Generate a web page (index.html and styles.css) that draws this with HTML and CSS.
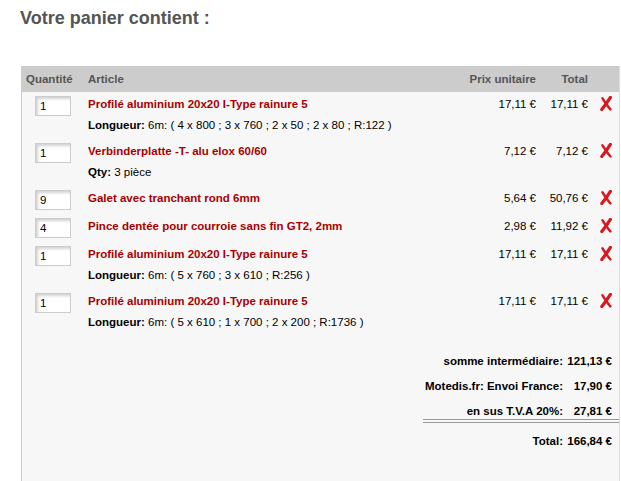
FILE: index.html
```html
<!DOCTYPE html>
<html lang="fr">
<head>
  <meta charset="UTF-8">
  <meta name="viewport" content="width=device-width, initial-scale=1.0">
  <title>Votre panier</title>
  <link rel="stylesheet" href="styles.css">
</head>
<body>

  <h1 class="cart-title">Votre panier contient :</h1>

  <div class="cart-panel">
    <table class="cart-table">
      <colgroup>
        <col class="col-qty">
        <col class="col-article">
        <col class="col-price">
        <col class="col-total">
        <col class="col-remove">
      </colgroup>
      <thead>
        <tr>
          <th class="th-qty">Quantité</th>
          <th>Article</th>
          <th class="num">Prix unitaire</th>
          <th class="num">Total</th>
          <th></th>
        </tr>
      </thead>
      <tbody>
        <tr>
          <td class="qty"><input type="text" value="1"></td>
          <td>
            <div class="name">Profilé aluminium 20x20 I-Type rainure 5</div>
            <div class="detail"><b>Longueur:</b> 6m: ( 4 x 800 ; 3 x 760 ; 2 x 50 ; 2 x 80 ; R:122 )</div>
          </td>
          <td class="num">17,11 €</td>
          <td class="num">17,11 €</td>
          <td class="remove"><svg viewBox="0 0 12 15"><path d="M10.4 1.4 C8.4 4.6 5.6 8.8 1.8 13.6"/><path class="thin" d="M2.4 2.2 C4.2 5 7 9.6 10.4 13.4"/></svg></td>
        </tr>
        <tr>
          <td class="qty"><input type="text" value="1"></td>
          <td>
            <div class="name">Verbinderplatte -T- alu elox 60/60</div>
            <div class="detail"><b>Qty:</b> 3 pièce</div>
          </td>
          <td class="num">7,12 €</td>
          <td class="num">7,12 €</td>
          <td class="remove"><svg viewBox="0 0 12 15"><path d="M10.4 1.4 C8.4 4.6 5.6 8.8 1.8 13.6"/><path class="thin" d="M2.4 2.2 C4.2 5 7 9.6 10.4 13.4"/></svg></td>
        </tr>
        <tr>
          <td class="qty"><input type="text" value="9"></td>
          <td><div class="name">Galet avec tranchant rond 6mm</div></td>
          <td class="num">5,64 €</td>
          <td class="num">50,76 €</td>
          <td class="remove"><svg viewBox="0 0 12 15"><path d="M10.4 1.4 C8.4 4.6 5.6 8.8 1.8 13.6"/><path class="thin" d="M2.4 2.2 C4.2 5 7 9.6 10.4 13.4"/></svg></td>
        </tr>
        <tr>
          <td class="qty"><input type="text" value="4"></td>
          <td><div class="name">Pince dentée pour courroie sans fin GT2, 2mm</div></td>
          <td class="num">2,98 €</td>
          <td class="num">11,92 €</td>
          <td class="remove"><svg viewBox="0 0 12 15"><path d="M10.4 1.4 C8.4 4.6 5.6 8.8 1.8 13.6"/><path class="thin" d="M2.4 2.2 C4.2 5 7 9.6 10.4 13.4"/></svg></td>
        </tr>
        <tr>
          <td class="qty"><input type="text" value="1"></td>
          <td>
            <div class="name">Profilé aluminium 20x20 I-Type rainure 5</div>
            <div class="detail"><b>Longueur:</b> 6m: ( 5 x 760 ; 3 x 610 ; R:256 )</div>
          </td>
          <td class="num">17,11 €</td>
          <td class="num">17,11 €</td>
          <td class="remove"><svg viewBox="0 0 12 15"><path d="M10.4 1.4 C8.4 4.6 5.6 8.8 1.8 13.6"/><path class="thin" d="M2.4 2.2 C4.2 5 7 9.6 10.4 13.4"/></svg></td>
        </tr>
        <tr>
          <td class="qty"><input type="text" value="1"></td>
          <td>
            <div class="name">Profilé aluminium 20x20 I-Type rainure 5</div>
            <div class="detail"><b>Longueur:</b> 6m: ( 5 x 610 ; 1 x 700 ; 2 x 200 ; R:1736 )</div>
          </td>
          <td class="num">17,11 €</td>
          <td class="num">17,11 €</td>
          <td class="remove"><svg viewBox="0 0 12 15"><path d="M10.4 1.4 C8.4 4.6 5.6 8.8 1.8 13.6"/><path class="thin" d="M2.4 2.2 C4.2 5 7 9.6 10.4 13.4"/></svg></td>
        </tr>
      </tbody>
    </table>

    <table class="summary">
      <tr>
        <td class="label">somme intermédiaire:</td>
        <td class="value">121,13 €</td>
      </tr>
      <tr>
        <td class="label">Motedis.fr: Envoi France:</td>
        <td class="value">17,90 €</td>
      </tr>
      <tr class="last">
        <td class="label">en sus T.V.A 20%:</td>
        <td class="value">27,81 €</td>
      </tr>
      <tr class="grand">
        <td class="label">Total:</td>
        <td class="value">166,84 €</td>
      </tr>
    </table>
  </div>

</body>
</html>
```

FILE: styles.css
```css
body {
  font-family: 'Liberation Sans', Arial, sans-serif;
  font-size: 11.5px;
  color: #000;
  background-color: #fff;
  margin: 0;
  padding: 0;
}
.cart-title {
  font-size: 18px;
  line-height: 22px;
  color: #555;
  margin: 7px 0 37px 20px;
}
.cart-panel {
  margin-left: 21px;
  width: 597px;
  background-color: #f7f7f7;
  border-left: 1px solid #ccc;
  border-right: 1px solid #ddd;
  padding-bottom: 40px;
}
.cart-table {
  width: 100%;
  border-collapse: collapse;
  table-layout: fixed;
}
.col-qty { width: 66px; }
.col-price { width: 90px; }
.col-total { width: 52px; }
.col-remove { width: 31px; }
.cart-table th {
  background-color: #ccc;
  color: #555;
  font-weight: bold;
  text-align: left;
  line-height: 16px;
  padding: 5px 0;
}
.cart-table th.th-qty {
  padding-left: 4px;
}
.cart-table .num {
  text-align: right;
  white-space: nowrap;
}
.cart-table td {
  vertical-align: top;
  line-height: 16px;
  padding: 4px 0;
}
.cart-table td.qty {
  padding-left: 13px;
}
.cart-table input {
  box-sizing: border-box;
  width: 36px;
  height: 20px;
  margin: 0;
  padding: 0 0 0 4px;
  border: 1px solid #ccc;
  background-color: #fff;
  box-shadow: inset 2px 2px 3px rgba(0, 0, 0, 0.18);
  font-family: inherit;
  font-size: 11.5px;
  color: #000;
  outline: none;
}
.name {
  color: #a80000;
  font-weight: bold;
  white-space: nowrap;
}
.detail {
  margin-top: 5px;
  margin-bottom: 2px;
  white-space: nowrap;
}
.cart-table td.remove {
  padding-left: 12px;
  padding-top: 4px;
}
.remove svg {
  display: block;
  width: 12px;
  height: 15px;
  fill: none;
  stroke: #d71920;
  stroke-width: 3.2;
  stroke-linecap: round;
}
.remove svg .thin {
  stroke-width: 2.4;
}
.summary {
  margin: 12px 0 0 auto;
  width: 196px;
  border-collapse: collapse;
  font-weight: bold;
}
.summary td {
  line-height: 16px;
  padding: 4.5px 0;
  white-space: nowrap;
}
.summary .label {
  text-align: right;
}
.summary .value {
  text-align: right;
  width: 45px;
  padding-left: 4px;
  padding-right: 7px;
}
.summary .last td {
  padding-bottom: 0;
}
.summary .grand td {
  border-top: 4px double #999;
  padding-top: 10.5px;
}
```
